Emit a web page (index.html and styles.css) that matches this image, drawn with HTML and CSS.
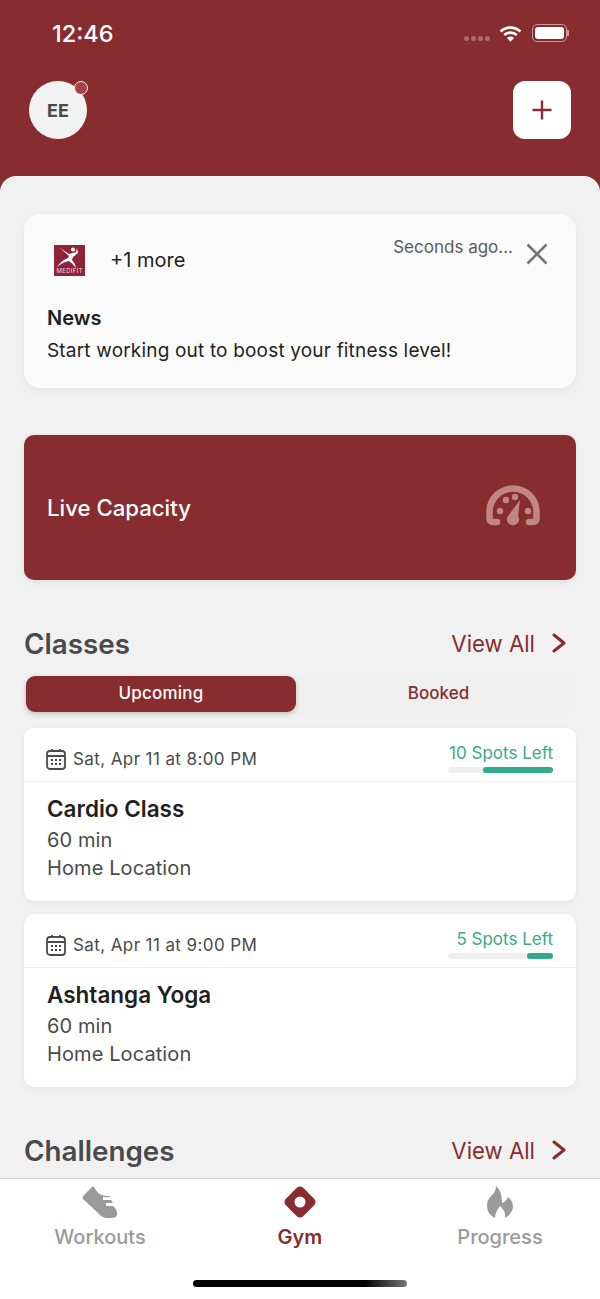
FILE: index.html
```html
<!DOCTYPE html>
<html lang="en">
<head>
    <meta charset="UTF-8">
    <meta name="viewport" content="width=device-width, initial-scale=1.0">
    <title>Gym</title>
    <link rel="stylesheet" href="styles.css">
</head>
<body>

<div class="app">
    <!-- Header -->
    <header class="header">
        <div class="status-bar">
            <span class="clock">12:46</span>
            <div class="status-icons">
                <div class="signal"><i></i><i></i><i></i><i></i></div>
                <svg class="wifi" width="23" height="17" viewBox="0 0 22 16">
                    <path d="M1.5 6 A14 14 0 0 1 20.5 6" fill="none" stroke="#fff" stroke-width="2.6"/>
                    <path d="M5 9.5 A9 9 0 0 1 17 9.5" fill="none" stroke="#fff" stroke-width="2.6"/>
                    <path d="M7.6 12.2 A5 5 0 0 1 14.4 12.2 L11 16 Z" fill="#fff"/>
                </svg>
                <div class="battery"><div class="battery-fill"></div></div>
                <div class="battery-cap"></div>
            </div>
        </div>
        <div class="top-actions">
            <div class="avatar">EE<span class="avatar-dot"></span></div>
            <div class="add-btn">
                <svg width="22" height="22" viewBox="0 0 22 22">
                    <path d="M11 1.5 V20.5 M1.5 11 H20.5" stroke="#872d2f" stroke-width="2.4" fill="none"/>
                </svg>
            </div>
        </div>
    </header>

    <main class="sheet">
        <!-- News -->
        <section class="news-card">
            <div class="news-top">
                <div class="news-from">
                    <svg class="news-logo" width="31" height="31" viewBox="0 0 31 31">
                        <rect width="31" height="31" fill="#8f2438"/>
                        <circle cx="19" cy="4.500" r="2" fill="#fff"/>
                        <path d="M6 3 L15 9 L22 7 L23 3 L24 8 L19 12 L18 15 Q21 18 22 23 Q18 18 15 16 Q9 17 3 22 Q8 15 14 13 L15 11 Z" fill="#fff"/>
                        <text class="logo-text" x="15.500" y="28" text-anchor="middle" textLength="26">MEDIFIT</text>
                    </svg>
                    <span class="news-more">+1 more</span>
                </div>
                <div class="news-time">
                    <span>Seconds ago...</span>
                    <svg width="22" height="22" viewBox="0 0 22 22">
                        <path d="M1.5 1.5 L20.5 20.5 M20.5 1.5 L1.5 20.5" stroke="#757575" stroke-width="2.6" fill="none"/>
                    </svg>
                </div>
            </div>
            <h3 class="news-title">News</h3>
            <p class="news-text">Start working out to boost your fitness level!</p>
        </section>

        <!-- Live capacity -->
        <section class="capacity">
            <span>Live Capacity</span>
            <svg class="gauge" width="54" height="42" viewBox="0 0 54 42">
                <path d="M11 37 H7 Q3.500 37 3.500 33 V27 A23.500 23.500 0 0 1 50.500 27 V33 Q50.500 37 47 37 H43" fill="none" stroke="#c08686" stroke-width="6.500" stroke-linecap="round"/>
                <circle cx="14" cy="26" r="3.200" fill="#c08686"/>
                <circle cx="20" cy="15" r="3.200" fill="#c08686"/>
                <circle cx="29" cy="12" r="3.200" fill="#c08686"/>
                <circle cx="42" cy="26" r="3.200" fill="#c08686"/>
                <path d="M34 15 L32 31 A6 6 0 1 1 22 31 Z" fill="#c08686"/>
            </svg>
        </section>

        <!-- Classes -->
        <div class="section-head classes-head">
            <h2>Classes</h2>
            <a class="view-all" href="#">View All
                <svg width="14" height="20" viewBox="0 0 14 20"><path d="M2 2 L12 10 L2 18" fill="none" stroke="#872d2f" stroke-width="3" stroke-linecap="round" stroke-linejoin="round"/></svg>
            </a>
        </div>
        <div class="tabs">
            <div class="tab active">Upcoming</div>
            <div class="tab">Booked</div>
        </div>

        <article class="class-card">
            <div class="class-top">
                <div class="class-date">
                    <svg width="20" height="22" viewBox="0 0 20 22"><use href="#cal"/></svg>
                    <span>Sat, Apr 11 at 8:00 PM</span>
                </div>
                <div class="spots">
                    <span>10 Spots Left</span>
                    <div class="spots-bar"><div class="spots-fill" style="width: 67%"></div></div>
                </div>
            </div>
            <div class="class-body">
                <h3>Cardio Class</h3>
                <p>60 min</p>
                <p>Home Location</p>
            </div>
        </article>

        <article class="class-card">
            <div class="class-top">
                <div class="class-date">
                    <svg width="20" height="22" viewBox="0 0 20 22"><use href="#cal"/></svg>
                    <span>Sat, Apr 11 at 9:00 PM</span>
                </div>
                <div class="spots">
                    <span>5 Spots Left</span>
                    <div class="spots-bar"><div class="spots-fill" style="width: 25%"></div></div>
                </div>
            </div>
            <div class="class-body">
                <h3>Ashtanga Yoga</h3>
                <p>60 min</p>
                <p>Home Location</p>
            </div>
        </article>

        <!-- Challenges -->
        <div class="section-head challenges-head">
            <h2>Challenges</h2>
            <a class="view-all" href="#">View All
                <svg width="14" height="20" viewBox="0 0 14 20"><path d="M2 2 L12 10 L2 18" fill="none" stroke="#872d2f" stroke-width="3" stroke-linecap="round" stroke-linejoin="round"/></svg>
            </a>
        </div>
    </main>

    <!-- Bottom nav -->
    <nav class="tabbar">
        <div class="nav-items">
            <div class="nav-item">
                <svg width="36" height="32" viewBox="0 0 36 32">
                    <path d="M11 0 L16 7 Q20 10 24 10 L28 10 L28 11 H21 V14 H29 L31 17 H24 V20 H31 Q36 24 35 29 Q34 32 30 32 H24 Q19 31 16 27 L1 13 Q0 11 2 9 Z" fill="#9a9a9a"/>
                </svg>
                <span>Workouts</span>
            </div>
            <div class="nav-item current">
                <svg width="32" height="32" viewBox="0 0 32 32">
                    <path d="M16 5 L27 16 L16 27 L5 16 Z" fill="#872d2f" stroke="#872d2f" stroke-width="9" stroke-linejoin="round"/>
                    <circle cx="16" cy="16" r="5.500" fill="#fff"/>
                </svg>
                <span>Gym</span>
            </div>
            <div class="nav-item">
                <svg width="26" height="32" viewBox="0 0 26 32">
                    <path d="M9 0 Q15 5 15 17 Q19 16 21 11 Q26 15 26 21 Q25 28 18 32 Q19 25 13 20 Q8 26 8 32 Q0 28 0 20 Q0 14 4 10 Q9 6 9 0 Z" fill="#9a9a9a"/>
                </svg>
                <span>Progress</span>
            </div>
        </div>
        <div class="home-bar"></div>
    </nav>
</div>

<!-- Calendar icon -->
<svg class="icon-defs" width="0" height="0">
    <symbol id="cal" viewBox="0 0 20 22">
        <rect x="1" y="3" width="18" height="18" rx="3" fill="none" stroke="#4a4a4a" stroke-width="1.8"/>
        <path d="M1 8 H19 M6 1 V4 M14 1 V4" stroke="#4a4a4a" stroke-width="1.8" fill="none"/>
        <path d="M5 11 h2 v2 h-2 Z M9 11 h2 v2 h-2 Z M13 11 h2 v2 h-2 Z M5 15 h2 v2 h-2 Z M9 15 h2 v2 h-2 Z M13 15 h2 v2 h-2 Z" fill="#4a4a4a"/>
    </symbol>
</svg>

</body>
</html>
```

FILE: styles.css
```css
body {
    font-family: 'Inter', 'Roboto', sans-serif;
    background-color: #872d2f;
    color: #1f1f1f;
    margin: 0;
    padding: 0;
}
h2, h3, p {
    margin: 0;
}
.app {
    display: flex;
    flex-direction: column;
    height: 1299px;
    overflow: hidden;
}
.icon-defs {
    display: block;
}

/* Header */
.header {
    height: 176px;
    flex-shrink: 0;
    background-color: #872d2f;
    box-sizing: border-box;
    padding: 0 29px;
}
.status-bar {
    display: flex;
    justify-content: space-between;
    align-items: center;
    height: 66px;
    padding: 0 2px 0 23px;
}
.clock {
    color: #fff;
    font-size: 23.5px;
    font-weight: 500;
}
.status-icons {
    display: flex;
    align-items: center;
}
.signal {
    display: flex;
    gap: 2px;
    margin-right: 9px;
    margin-top: 10px;
}
.signal i {
    width: 5px;
    height: 5px;
    border-radius: 50%;
    background-color: #b06a6b;
}
.wifi {
    margin-right: 10px;
}
.battery {
    width: 35px;
    height: 18px;
    box-sizing: border-box;
    border: 1px solid #c99a9b;
    border-radius: 5px;
    padding: 2px;
}
.battery-fill {
    height: 100%;
    background-color: #fff;
    border-radius: 3px;
}
.battery-cap {
    width: 2px;
    height: 6px;
    background-color: #c99a9b;
}
.top-actions {
    display: flex;
    justify-content: space-between;
    margin-top: 15px;
}
.avatar {
    position: relative;
    width: 58px;
    height: 58px;
    border-radius: 50%;
    background-color: #f2f2f2;
    color: #4a4a4a;
    font-size: 18px;
    font-weight: 700;
    display: flex;
    align-items: center;
    justify-content: center;
}
.avatar-dot {
    position: absolute;
    top: 0;
    right: -1px;
    width: 12px;
    height: 12px;
    border-radius: 50%;
    background-color: #a8414a;
    border: 1px solid #f2f2f2;
}
.add-btn {
    width: 58px;
    height: 58px;
    border-radius: 12px;
    background-color: #fff;
    display: flex;
    align-items: center;
    justify-content: center;
}

/* Content */
.sheet {
    flex: 1;
    min-height: 0;
    overflow: hidden;
    background-color: #f1f1f1;
    border-radius: 16px 16px 0 0;
    padding: 38px 24px 0;
}
.news-card {
    height: 174px;
    box-sizing: border-box;
    padding: 18px 23px 0;
    background-color: #fafafa;
    border-radius: 16px;
    box-shadow: 0 3px 10px rgba(0, 0, 0, 0.05);
}
.news-top {
    display: flex;
    justify-content: space-between;
    height: 74px;
}
.news-from {
    display: flex;
    align-items: center;
    height: 56px;
    padding-left: 7px;
}
.logo-text {
    fill: #f0d8dc;
    font-size: 6px;
}
.news-more {
    font-size: 20px;
    margin-left: 25px;
}
.news-time {
    display: flex;
    gap: 13px;
    color: #5c5c5c;
    font-size: 17px;
    padding-right: 5px;
    padding-top: 5px;
}
.news-time svg {
    margin-top: 6px;
}
.news-title {
    font-size: 20px;
    font-weight: 600;
    line-height: 24px;
}
.news-text {
    font-size: 19px;
    letter-spacing: 0.18px;
    line-height: 24px;
    margin-top: 9px;
}
.capacity {
    margin-top: 47px;
    height: 145px;
    box-sizing: border-box;
    padding: 0 36px 0 23px;
    background-color: #872d2f;
    border-radius: 10px;
    color: #fff;
    font-size: 22.2px;
    font-weight: 500;
    display: flex;
    justify-content: space-between;
    align-items: center;
    box-shadow: 0 2px 6px rgba(0, 0, 0, 0.08);
}
.gauge {
    margin-bottom: 4px;
}
.section-head {
    display: flex;
    justify-content: space-between;
    align-items: center;
    height: 32px;
}
.section-head h2 {
    color: #4a4a4a;
    font-size: 27.8px;
    font-weight: 600;
}
.view-all {
    display: flex;
    align-items: center;
    gap: 17px;
    color: #872d2f;
    font-size: 22.2px;
    text-decoration: none;
    padding: 0 10px 2px 0;
}
.classes-head {
    margin-top: 48px;
}
.challenges-head {
    margin-top: 48px;
}
.tabs {
    display: flex;
    margin-top: 14px;
    height: 40px;
    box-sizing: border-box;
    padding: 2px;
    background-color: #efefef;
    border-radius: 10px;
}
.tab {
    flex: 1;
    display: flex;
    align-items: center;
    justify-content: center;
    padding: 0 0 2px 7px;
    color: #872d2f;
    font-size: 17px;
    font-weight: 500;
    border-radius: 9px;
}
.tab.active {
    flex: 0 0 270px;
    padding-left: 0;
    background-color: #872d2f;
    color: #fff;
    letter-spacing: 0.2px;
    box-shadow: 0 2px 5px rgba(0, 0, 0, 0.2);
}
.class-card {
    margin-top: 14px;
    height: 173px;
    background-color: #fff;
    border-radius: 10px;
    box-shadow: 0 2px 6px rgba(0, 0, 0, 0.06);
}
.class-card + .class-card {
    margin-top: 13px;
}
.class-top {
    display: flex;
    justify-content: space-between;
    height: 54px;
    box-sizing: border-box;
    padding: 14px 23px 0 22px;
    border-bottom: 1px solid #ededed;
}
.class-date {
    display: flex;
    align-items: center;
    gap: 7px;
    height: 34px;
    color: #4a4a4a;
    font-size: 17px;
    letter-spacing: 0.4px;
}
.spots {
    color: #3aa98c;
    font-size: 17px;
    text-align: right;
    width: 105px;
}
.spots span {
    display: block;
    line-height: 22px;
    white-space: nowrap;
}
.spots-bar {
    height: 6px;
    margin-top: 3px;
    background-color: #eeeeee;
    border-radius: 3px;
    display: flex;
    justify-content: flex-end;
}
.spots-fill {
    background-color: #33ab8b;
    border-radius: 3px;
}
.class-body {
    padding: 13px 23px 0;
    color: #4a4a4a;
    font-size: 20px;
    line-height: 28px;
}
.class-body h3 {
    color: #1f1f1f;
    font-size: 22.5px;
    font-weight: 600;
    line-height: 28px;
    margin-bottom: 3px;
}
.class-body p {
    letter-spacing: 0.1px;
}

/* Bottom nav */
.tabbar {
    flex-shrink: 0;
    height: 121px;
    box-sizing: border-box;
    background-color: #fff;
    border-top: 1px solid #d4d4d4;
    position: relative;
}
.nav-items {
    display: flex;
    justify-content: space-between;
    padding: 7px 0 0;
}
.nav-item {
    width: 200px;
    display: flex;
    flex-direction: column;
    align-items: center;
    color: #9a9a9a;
    font-size: 20px;
    font-weight: 500;
}
.nav-item svg {
    height: 32px;
}
.nav-item span {
    margin-top: 6px;
    line-height: 26px;
}
.nav-item.current {
    color: #872d2f;
    font-weight: 600;
}
.home-bar {
    position: absolute;
    left: 193px;
    bottom: 12px;
    width: 214px;
    height: 7px;
    border-radius: 4px;
    background: linear-gradient(to right, #000 0%, #000 80%, #777 100%);
}
```
